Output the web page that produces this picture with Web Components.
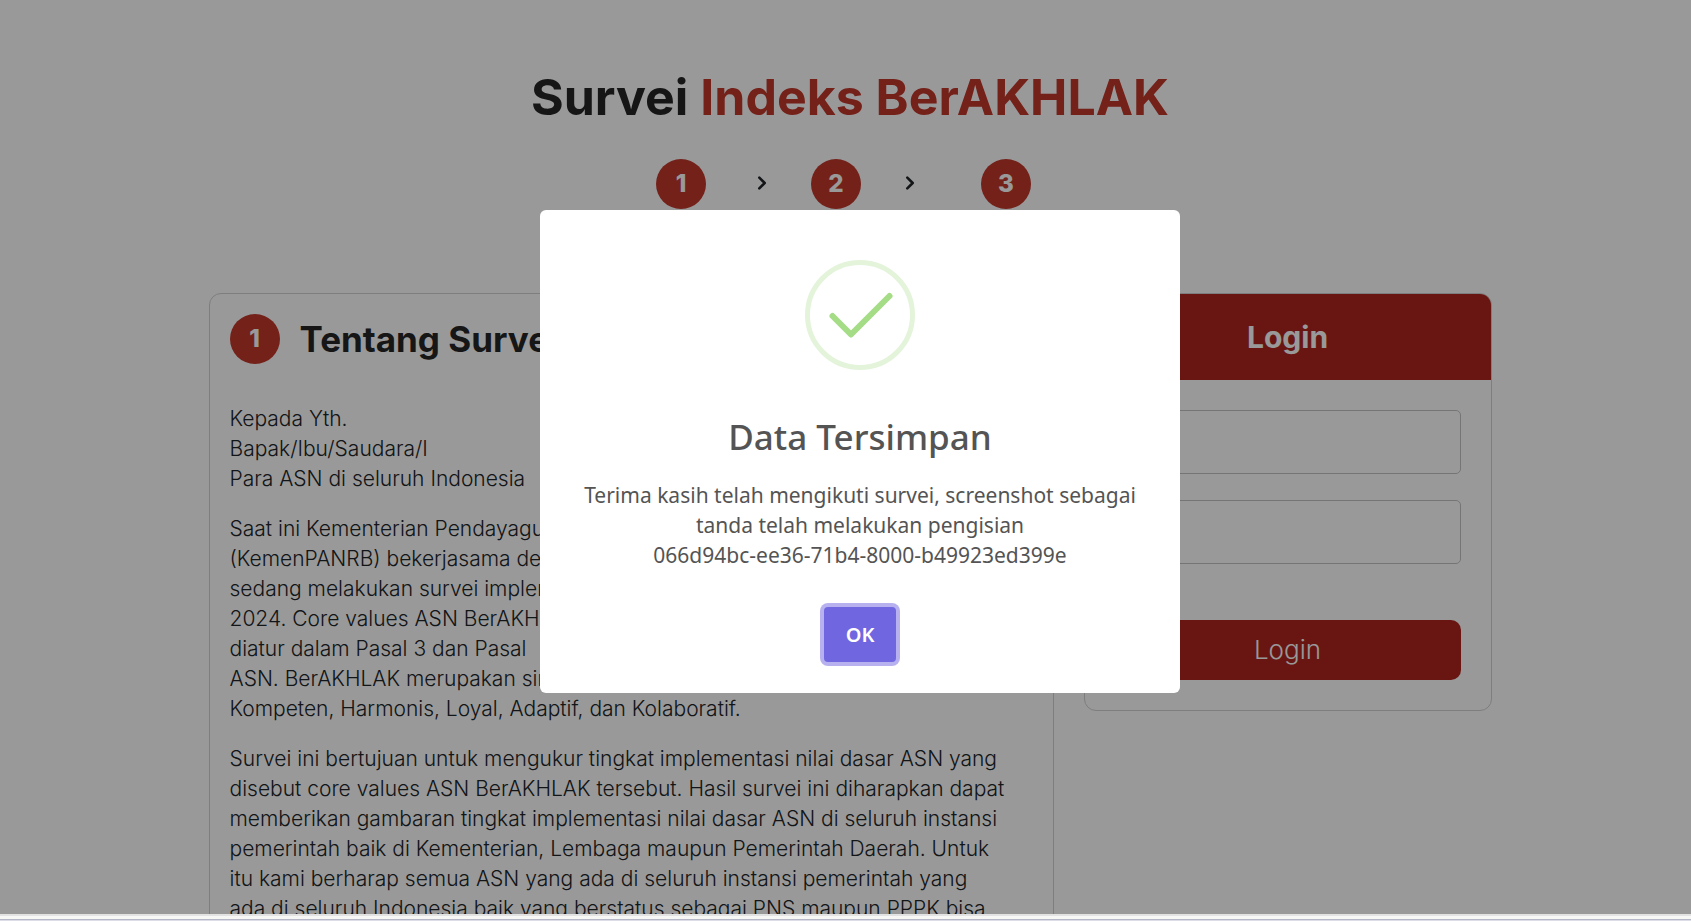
<!DOCTYPE html>
<html lang="id">
<head>
<meta charset="utf-8">
<title>Survei Indeks BerAKHLAK</title>
<style>
html, body { margin: 0; height: 100%; overflow: hidden; background: #fff; }
</style>
</head>
<body>
<survey-page></survey-page>
<script>
const define = (name, html) => {
  const tpl = document.createElement('template');
  tpl.innerHTML = '<style>*{box-sizing:border-box}</style>' + html;
  customElements.define(name, class extends HTMLElement {
    constructor() {
      super();
      this.attachShadow({ mode: 'open' }).append(tpl.content.cloneNode(true));
    }
  });
};

define('step-badge', `
<style>
:host { display: grid; place-items: center; flex: none; width: 50px; height: 50px; border-radius: 50%;
  background: #c0372b; color: #fff; font-size: 24px; line-height: 50px; font-weight: 800; }
</style>
<slot></slot>`);

define('step-list', `
<style>
ol { display: flex; justify-content: center; gap: 24px; margin: 0; padding: 0 0 0 2px; list-style: none; }
.step { display: grid; justify-items: center; width: 102px; }
.step.second { width: 88px; }
.step.third { width: 132px; }
.arrow { display: flex; align-items: center; height: 48px; }
svg { display: block; width: 12px; height: 14px; }
path { fill: none; stroke: #212529; stroke-width: 2.6; stroke-linecap: round; stroke-linejoin: round; }
</style>
<ol>
  <li class="step"><step-badge>1</step-badge></li>
  <li class="arrow" aria-hidden="true"><svg viewBox="0 0 12 14"><path d="M3.3 1.6L8.7 7l-5.4 5.4"/></svg></li>
  <li class="step second"><step-badge>2</step-badge></li>
  <li class="arrow" aria-hidden="true"><svg viewBox="0 0 12 14"><path d="M3.3 1.6L8.7 7l-5.4 5.4"/></svg></li>
  <li class="step third"><step-badge>3</step-badge></li>
</ol>`);

define('about-card', `
<style>
:host { display: block; border: 1px solid #d2d2d2; border-radius: 12px; padding: 20px; }
header { display: flex; align-items: center; gap: 20px; margin-bottom: 40px; }
h2 { margin: 0; font-size: 35px; line-height: 50px; font-weight: 700; color: #262626; white-space: nowrap; }
::slotted(p) { margin: 0 0 20px; white-space: nowrap; }
</style>
<header><step-badge>1</step-badge><h2><slot name="title"></slot></h2></header>
<slot></slot>`);

define('login-card', `
<style>
:host { display: block; border: 1px solid #d2d2d2; border-radius: 12px; overflow: hidden; }
h2 { margin: 0; background: #af2520; color: #fff; text-align: center; font-size: 30px; line-height: 86px; font-weight: 700; }
form { display: grid; gap: 26px; padding: 30px; }
input { display: block; width: 100%; height: 64px; padding: 0 20px; border: 1px solid #c4c4c4; border-radius: 5px;
  background: #fff; font: inherit; }
button { height: 60px; margin-top: 30px; border: 0; border-radius: 10px; background: #af2520; color: #fff;
  font: inherit; font-size: 26px; }
</style>
<h2>Login</h2>
<form>
  <input type="text" aria-label="Username">
  <input type="password" aria-label="Password">
  <button type="button">Login</button>
</form>`);

define('success-icon', `
<style>:host, svg { display: block; width: 110px; height: 110px; }</style>
<svg viewBox="0 0 110 110" fill="none" aria-hidden="true">
  <circle cx="55" cy="55" r="52.5" stroke="#e4f4db" stroke-width="5"/>
  <path d="M27.5 56L46 74.5 84.5 36" stroke="#a5dc86" stroke-width="6" stroke-linecap="round" stroke-linejoin="round"/>
</svg>`);

define('alert-modal', `
<style>
:host { position: absolute; inset: 0; display: grid; place-items: center; padding: 0 0 11px 29px;
  background: rgba(0,0,0,.4); color: #545454; font-family: "Noto Sans", "Open Sans", sans-serif; font-weight: 400; }
section { display: grid; justify-items: center; width: 640px; max-width: 100%; padding: 50px 20px 31px;
  border-radius: 6px; background: #fff; text-align: center; }
h2 { margin: 45px 0 21px; font-size: 35px; line-height: 44px; font-weight: 500; }
p { margin: 0 0 37px; font-size: 21px; line-height: 30px; white-space: nowrap; }
button { width: 72px; height: 55px; border: 0; border-radius: 4px; background: #7066e0; color: #fff;
  box-shadow: 0 0 0 4px #b7b2ef; font: inherit; font-size: 20px; font-weight: 600; }
</style>
<section role="dialog" aria-modal="true">
  <success-icon></success-icon>
  <h2><slot name="title"></slot></h2>
  <p><slot></slot></p>
  <button type="button">OK</button>
</section>`);

define('survey-page', `
<style>
:host { display: flex; flex-direction: column; height: 100vh; font: 300 21px/30px Inter, sans-serif; color: #212529; }
.view { position: relative; flex: 1; min-height: 0; overflow: hidden; background: #fff; }
main { display: flex; flex-direction: column; max-width: 1292px; margin: 0 auto; padding: 60px 0 0 9px; }
h1 { margin: 0 0 24px; text-align: center; font-size: 50px; line-height: 75px; font-weight: 700; color: #262626; white-space: nowrap; }
h1 span { color: #c0372b; }
step-list { display: block; height: 134px; }
.cols { display: grid; grid-template-columns: 845fr 408fr; gap: 30px; align-items: start; }
.edge { flex: none; height: 7px; border-bottom: 1px solid #dcdde6;
  background: linear-gradient(#e2e2e2 0 2px, #f7f7f6 2px 5px, #b6b7c6 5px); background-clip: padding-box; }
</style>
<div class="view">
  <main>
    <h1>Survei <span>Indeks BerAKHLAK</span></h1>
    <step-list></step-list>
    <div class="cols">
      <about-card>
        <span slot="title">Tentang Survei</span>
        <p>Kepada Yth.<br>Bapak/Ibu/Saudara/I<br>Para ASN di seluruh Indonesia</p>
        <p>Saat ini Kementerian Pendayagunaan<br>(KemenPANRB) bekerjasama dengan<br>sedang melakukan survei implementasi<br>2024. Core values ASN BerAKHLAK<br>diatur dalam Pasal 3 dan Pasal<br>ASN. BerAKHLAK merupakan singkatan<br>Kompeten, Harmonis, Loyal, Adaptif, dan Kolaboratif.</p>
        <p>Survei ini bertujuan untuk mengukur tingkat implementasi nilai dasar ASN yang<br>disebut core values ASN BerAKHLAK tersebut. Hasil survei ini diharapkan dapat<br>memberikan gambaran tingkat implementasi nilai dasar ASN di seluruh instansi<br>pemerintah baik di Kementerian, Lembaga maupun Pemerintah Daerah. Untuk<br>itu kami berharap semua ASN yang ada di seluruh instansi pemerintah yang<br>ada di seluruh Indonesia baik yang berstatus sebagai PNS maupun PPPK bisa</p>
      </about-card>
      <login-card></login-card>
    </div>
  </main>
  <alert-modal><span slot="title">Data Tersimpan</span>Terima kasih telah mengikuti survei, screenshot sebagai<br>tanda telah melakukan pengisian<br>066d94bc-ee36-71b4-8000-b49923ed399e</alert-modal>
</div>
<div class="edge"></div>`);
</script>
</body>
</html>
